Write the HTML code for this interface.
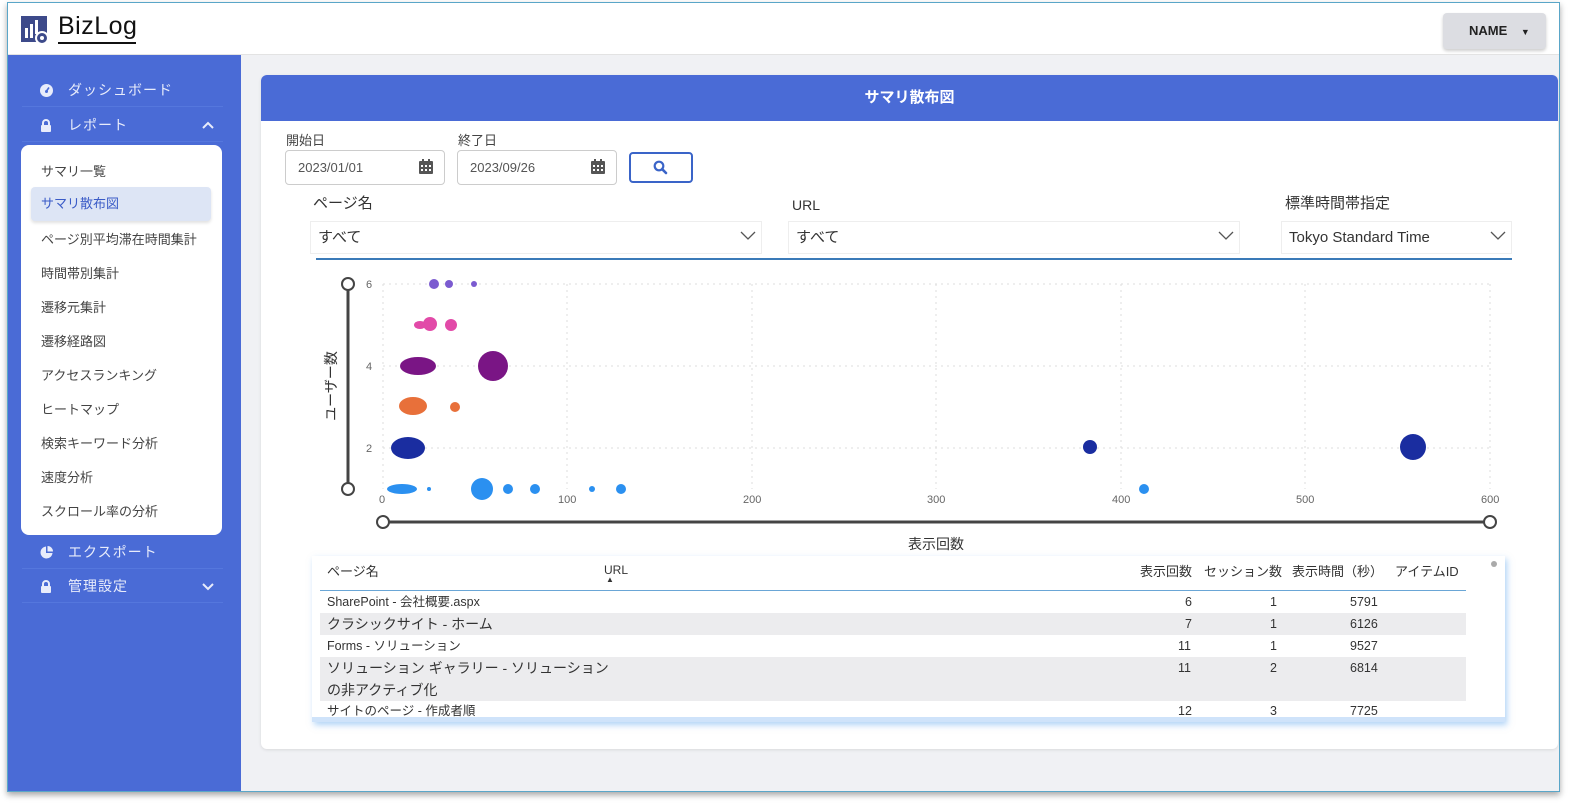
<!DOCTYPE html>
<html><head><meta charset="utf-8">
<style>
*{box-sizing:border-box;margin:0;padding:0}
body{width:1582px;height:808px;background:#fff;font-family:"Liberation Sans","Noto Sans CJK JP",sans-serif;position:relative;overflow:hidden;color:#333}
.win{position:absolute;left:7px;top:2px;width:1553px;height:790px;border:1px solid #5aa6c8;box-shadow:0 3px 6px rgba(0,0,0,.35);background:#f0f1f4;overflow:hidden}
.hdr{position:absolute;left:0;top:0;width:100%;height:52px;background:#fff;border-bottom:1px solid #e3e3e3}
.side{position:absolute;left:0;top:52px;width:233px;height:740px;background:#4a6bd6}
.a{position:absolute}
.nav{position:absolute;left:14px;width:201px;height:34px;border-bottom:1px solid #5577dd;color:#e8ecfb;font-size:14px;letter-spacing:1px;line-height:34px;padding-left:46px}
.sub{position:absolute;left:13px;top:90px;width:201px;height:390px;background:#fff;border-radius:8px}
.sub div{position:absolute;left:20px;font-size:13px;color:#444}
.card{position:absolute;left:253px;top:72px;width:1297px;height:674px;background:#fff;border-radius:6px;box-shadow:0 1px 3px rgba(0,0,0,.1)}
.ch{position:absolute;left:0;top:0;width:100%;height:46px;background:#4a6bd6;border-radius:6px 6px 0 0;color:#fff;font-weight:bold;font-size:15px;text-align:center;line-height:46px}
.inp{position:absolute;height:35px;border:1px solid #ccc;border-radius:4px;font-size:13px;color:#555;line-height:33px;padding-left:12px}
.sel{position:absolute;height:33px;border:1px solid #eee;font-size:15px;color:#333;line-height:31px;padding-left:7px}
.lbl{position:absolute;font-size:15px;color:#333}
.row{position:absolute;left:320px;width:1146px;font-size:12.5px;color:#333}
.row span{position:absolute}
</style></head><body>
<div class="win">
 <div class="hdr">
  <svg class="a" style="left:13px;top:13px" width="30" height="30" viewBox="0 0 30 30"><rect x="0" y="0" width="26" height="26" fill="#3d4a8a"/><rect x="4" y="12" width="3" height="10" fill="#fff"/><rect x="9" y="8" width="3" height="14" fill="#fff"/><rect x="14" y="4" width="3" height="14" fill="#fff"/><circle cx="21" cy="22" r="6" fill="#3d4a8a" stroke="#fff" stroke-width="2"/><circle cx="21" cy="22" r="2" fill="#fff"/></svg>
  <div class="a" style="left:50px;top:9px;font-size:25px;color:#111;letter-spacing:0.5px">BizLog</div>
  <div class="a" style="left:50px;top:39px;width:78px;height:2px;background:#111"></div>
  <div class="a" style="left:1435px;top:10px;width:103px;height:36px;background:#dcdde2;border-radius:4px;box-shadow:0 2px 3px rgba(0,0,0,.2);font-size:13px;font-weight:bold;color:#222;line-height:36px;padding-left:26px">NAME <span style="font-size:9px;margin-left:10px">▼</span></div>
 </div>
 <div class="side">
  <div class="nav" style="top:18px"><svg class="a" style="left:18px;top:11px" width="13" height="13" viewBox="0 0 13 13"><circle cx="6.5" cy="6.5" r="6.5" fill="#e8ecfb"/><path d="M6.5 7 9 3.5" stroke="#4a6bd6" stroke-width="1.6"/><circle cx="6.5" cy="7.5" r="1.5" fill="#4a6bd6"/></svg>ダッシュボード</div>
  <div class="nav" style="top:53px"><svg class="a" style="left:18px;top:11px" width="12" height="13" viewBox="0 0 12 13"><path d="M3 6V4a3 3 0 0 1 6 0v2" stroke="#e8ecfb" stroke-width="2" fill="none"/><rect x="1" y="6" width="10" height="7" rx="1" fill="#e8ecfb"/></svg>レポート<svg class="a" style="left:180px;top:13px" width="12" height="8"><path d="M1 7l5-5 5 5" stroke="#e8ecfb" stroke-width="2" fill="none"/></svg></div>
  <div class="sub">
   <div style="top:16px">サマリ一覧</div>
   <div style="left:10px;top:42px;width:180px;height:34px;background:#dde5f5;border-radius:4px;box-shadow:0 2px 3px rgba(0,0,0,.12);color:#3a5bc7;padding-left:10px;line-height:34px">サマリ散布図</div>
   <div style="top:84px">ページ別平均滞在時間集計</div>
   <div style="top:118px">時間帯別集計</div>
   <div style="top:152px">遷移元集計</div>
   <div style="top:186px">遷移経路図</div>
   <div style="top:220px">アクセスランキング</div>
   <div style="top:254px">ヒートマップ</div>
   <div style="top:288px">検索キーワード分析</div>
   <div style="top:322px">速度分析</div>
   <div style="top:356px">スクロール率の分析</div>
  </div>
  <div class="nav" style="top:480px"><svg class="a" style="left:18px;top:11px" width="13" height="13" viewBox="0 0 13 13"><path d="M6 0.5A6 6 0 1 0 12.5 7H6z" fill="#e8ecfb"/><path d="M7.5 0a5.5 5.5 0 0 1 5.5 5.5H7.5z" fill="#e8ecfb"/></svg>エクスポート</div>
  <div class="nav" style="top:514px"><svg class="a" style="left:18px;top:11px" width="12" height="13" viewBox="0 0 12 13"><path d="M3 6V4a3 3 0 0 1 6 0v2" stroke="#e8ecfb" stroke-width="2" fill="none"/><rect x="1" y="6" width="10" height="7" rx="1" fill="#e8ecfb"/></svg>管理設定<svg class="a" style="left:180px;top:14px" width="12" height="8"><path d="M1 1l5 5 5-5" stroke="#e8ecfb" stroke-width="2" fill="none"/></svg></div>
 </div>
 <div class="card"><div class="ch">サマリ散布図</div></div>
</div>
<div class="a" style="left:286px;top:130px;font-size:13px;color:#444">開始日</div>
<div class="a" style="left:458px;top:130px;font-size:13px;color:#444">終了日</div>
<div class="inp" style="left:285px;top:150px;width:160px">2023/01/01</div>
<div class="inp" style="left:457px;top:150px;width:160px">2023/09/26</div>
<svg class="a" style="left:419px;top:159px" width="14" height="15" viewBox="0 0 14 15"><rect x="0" y="2" width="14" height="13" rx="1" fill="#555"/><rect x="3" y="0" width="2" height="4" fill="#555"/><rect x="9" y="0" width="2" height="4" fill="#555"/><g fill="#fff"><rect x="2" y="6" width="2" height="2"/><rect x="6" y="6" width="2" height="2"/><rect x="10" y="6" width="2" height="2"/><rect x="2" y="10" width="2" height="2"/><rect x="6" y="10" width="2" height="2"/><rect x="10" y="10" width="2" height="2"/></g></svg>
<svg class="a" style="left:591px;top:159px" width="14" height="15" viewBox="0 0 14 15"><rect x="0" y="2" width="14" height="13" rx="1" fill="#555"/><rect x="3" y="0" width="2" height="4" fill="#555"/><rect x="9" y="0" width="2" height="4" fill="#555"/><g fill="#fff"><rect x="2" y="6" width="2" height="2"/><rect x="6" y="6" width="2" height="2"/><rect x="10" y="6" width="2" height="2"/><rect x="2" y="10" width="2" height="2"/><rect x="6" y="10" width="2" height="2"/><rect x="10" y="10" width="2" height="2"/></g></svg>
<div class="a" style="left:629px;top:152px;width:64px;height:31px;border:2px solid #3a64c8;border-radius:4px"></div>
<svg class="a" style="left:653px;top:160px" width="15" height="15" viewBox="0 0 15 15"><circle cx="6" cy="6" r="4.3" stroke="#3a64c8" stroke-width="2.2" fill="none"/><path d="M9.2 9.2 13 13" stroke="#3a64c8" stroke-width="2.6" stroke-linecap="round"/></svg>
<div class="lbl" style="left:313px;top:192px">ページ名</div>
<div class="lbl" style="left:792px;top:197px;font-size:14px">URL</div>
<div class="lbl" style="left:1285px;top:192px">標準時間帯指定</div>
<div class="sel" style="left:310px;top:221px;width:452px">すべて</div>
<div class="sel" style="left:788px;top:221px;width:452px">すべて</div>
<div class="sel" style="left:1281px;top:221px;width:231px">Tokyo Standard Time</div>
<svg class="a" style="left:740px;top:231px" width="16" height="10"><path d="M1 1l7 7 7-7" stroke="#555" stroke-width="1.3" fill="none"/></svg>
<svg class="a" style="left:1218px;top:231px" width="16" height="10"><path d="M1 1l7 7 7-7" stroke="#555" stroke-width="1.3" fill="none"/></svg>
<svg class="a" style="left:1490px;top:231px" width="16" height="10"><path d="M1 1l7 7 7-7" stroke="#555" stroke-width="1.3" fill="none"/></svg>
<div class="a" style="left:316px;top:258px;width:1196px;height:2px;background:#3a7ab8"></div>
<svg class="a" style="left:300px;top:262px" width="1220" height="295" viewBox="300 262 1220 295">
 <g stroke="#ddd" stroke-dasharray="2,4" stroke-width="1">
  <line x1="383" y1="284" x2="1490" y2="284"/><line x1="383" y1="366" x2="1490" y2="366"/><line x1="383" y1="448" x2="1490" y2="448"/>
  <line x1="383" y1="284" x2="383" y2="489"/><line x1="567" y1="284" x2="567" y2="489"/><line x1="752" y1="284" x2="752" y2="489"/><line x1="936" y1="284" x2="936" y2="489"/><line x1="1121" y1="284" x2="1121" y2="489"/><line x1="1305" y1="284" x2="1305" y2="489"/><line x1="1490" y1="284" x2="1490" y2="489"/>
 </g>
 <g font-family="Liberation Sans" font-size="11" fill="#666">
  <text x="366" y="288">6</text><text x="366" y="370">4</text><text x="366" y="452">2</text>
  <text x="379" y="503">0</text><text x="558" y="503">100</text><text x="743" y="503">200</text><text x="927" y="503">300</text><text x="1112" y="503">400</text><text x="1296" y="503">500</text><text x="1481" y="503">600</text>
 </g>
 <line x1="348" y1="284" x2="348" y2="489" stroke="#444" stroke-width="3"/>
 <circle cx="348" cy="284" r="6" fill="#fff" stroke="#444" stroke-width="2"/><circle cx="348" cy="489" r="6" fill="#fff" stroke="#444" stroke-width="2"/>
 <line x1="383" y1="522" x2="1490" y2="522" stroke="#444" stroke-width="3"/>
 <circle cx="383" cy="522" r="6" fill="#fff" stroke="#444" stroke-width="2"/><circle cx="1490" cy="522" r="6" fill="#fff" stroke="#444" stroke-width="2"/>
 <text x="336" y="386" transform="rotate(-90 336 386)" text-anchor="middle" font-family="Liberation Sans,Noto Sans CJK JP" font-size="14" fill="#333">ユーザー数</text>
 <text x="936" y="549" text-anchor="middle" font-family="Liberation Sans,Noto Sans CJK JP" font-size="14" fill="#333">表示回数</text>
 <g fill="#7b5bd0"><circle cx="434" cy="284" r="5"/><circle cx="449" cy="284" r="4"/><circle cx="474" cy="284" r="3"/></g>
 <g fill="#e24aa8"><ellipse cx="420" cy="325" rx="6" ry="4"/><circle cx="430" cy="324" r="7"/><circle cx="451" cy="325" r="6"/></g>
 <g fill="#7a1585"><ellipse cx="418" cy="366" rx="18" ry="9"/><circle cx="493" cy="366" r="15"/></g>
 <g fill="#e8703a"><ellipse cx="413" cy="406" rx="14" ry="9"/><circle cx="455" cy="407" r="5"/></g>
 <g fill="#1a2da0"><ellipse cx="408" cy="448" rx="17" ry="11"/><circle cx="1090" cy="447" r="7"/><circle cx="1413" cy="447" r="13"/></g>
 <g fill="#2b90f0"><ellipse cx="402" cy="489" rx="15" ry="5"/><circle cx="482" cy="489" r="11"/><circle cx="508" cy="489" r="5"/><circle cx="535" cy="489" r="5"/><circle cx="621" cy="489" r="5"/><circle cx="592" cy="489" r="3"/><circle cx="1144" cy="489" r="5"/><circle cx="429" cy="489" r="2"/></g>
</svg>
<div class="a" style="left:312px;top:556px;width:1193px;height:166px;background:#fff;box-shadow:2px 3px 6px rgba(100,170,240,.5)"></div>
<div class="a" style="left:1491px;top:561px;width:6px;height:6px;border-radius:3px;background:#aaa"></div>
<div class="row" style="top:561px;height:30px;border-bottom:1.5px solid #6aa6d6;font-size:13px">
 <span style="left:7px">ページ名</span><span style="left:284px;top:2px;font-size:12px">URL</span><span style="left:286px;top:14px;font-size:8px">▲</span>
 <span style="left:820px">表示回数</span><span style="left:884px">セッション数</span><span style="left:972px">表示時間（秒）</span><span style="left:1075px">アイテムID</span>
</div>
<div class="row" style="top:591px;height:22px;line-height:22px"><span style="left:7px">SharePoint - 会社概要.aspx</span><span style="left:865px">6</span><span style="left:950px">1</span><span style="left:1030px">5791</span></div>
<div class="row" style="top:613px;height:22px;line-height:22px;background:#ececee"><span style="left:7px;font-size:14px">クラシックサイト - ホーム</span><span style="left:865px">7</span><span style="left:950px">1</span><span style="left:1030px">6126</span></div>
<div class="row" style="top:635px;height:22px;line-height:22px"><span style="left:7px">Forms - ソリューション</span><span style="left:858px">11</span><span style="left:950px">1</span><span style="left:1030px">9527</span></div>
<div class="row" style="top:657px;height:44px;line-height:22px;background:#ececee"><span style="left:7px;font-size:14px">ソリューション ギャラリー - ソリューション<br>の非アクティブ化</span><span style="left:858px">11</span><span style="left:950px">2</span><span style="left:1030px">6814</span></div>
<div class="row" style="top:701px;height:17px;line-height:20px;overflow:hidden"><span style="left:7px">サイトのページ - 作成者順</span><span style="left:858px">12</span><span style="left:950px">3</span><span style="left:1030px">7725</span></div>
<div class="a" style="left:312px;top:717px;width:1193px;height:5px;background:#cfe3fa"></div>
</body></html>
